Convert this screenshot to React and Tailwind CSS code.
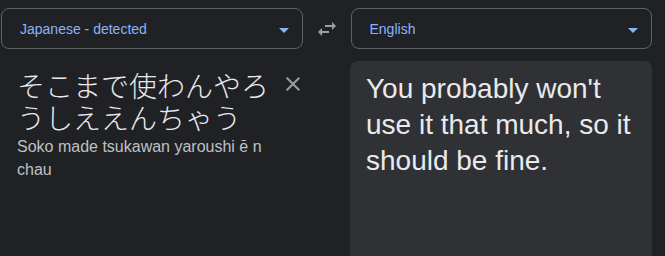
import React from 'react';

function Caret() {
  return (
    <svg width="10" height="5" viewBox="7 10 10 5" className="mt-[3px]" aria-hidden="true">
      <path d="M7 10l5 5 5-5z" fill="#8ab4f8" />
    </svg>
  );
}

function LangSelect({ label }) {
  return (
    <div className="flex h-[41px] flex-1 items-center justify-between rounded-lg border border-[#5f6368] pl-[18px] pr-[13px] text-[14px] text-[#8ab4f8]">
      <span className="pt-[2px]">{label}</span>
      <Caret />
    </div>
  );
}

export default function App() {
  return (
    <div
      className="h-[256px] w-[665px] overflow-hidden bg-[#202124] text-[#e8eaed]"
      style={{ fontFamily: '"Liberation Sans", Arial, "Noto Sans CJK JP", sans-serif' }}
    >
      {/* language bar */}
      <div className="flex items-center pl-px pr-[13px] pt-2">
        <LangSelect label="Japanese - detected" />
        <div className="flex w-[48px] items-center justify-center">
          <svg width="24" height="24" viewBox="0 0 24 24" aria-hidden="true">
            <path d="M6.99 11L3 15l3.99 4v-3H14v-2H6.99v-3zM21 9l-3.99-4v3H10v2h7.01v3L21 9z" fill="#9aa0a6" />
          </svg>
        </div>
        <LangSelect label="English" />
      </div>

      {/* panels */}
      <div className="mt-3 flex pr-[13px]">
        <div className="flex w-[350px] pl-[17px] pt-[8px]">
          <div className="w-[264px]">
            <div className="text-[28px] font-light leading-[32px] text-[#e8eaed]" style={{ fontFamily: '"Noto Sans CJK JP", sans-serif' }}>
              そこまで使わんやろうしええんちゃう
            </div>
            <div className="mt-[2px] text-[16px] leading-[23px] text-[#bdc1c6]">
              Soko made tsukawan yaroushi ē n chau
            </div>
          </div>
          <div className="pt-[3px]">
            <svg width="24" height="24" viewBox="0 0 24 24" aria-hidden="true">
              <path d="M19 6.41L17.59 5 12 10.59 6.41 5 5 6.41 10.59 12 5 17.59 6.41 19 12 13.41 17.59 19 19 17.59 13.41 12z" fill="#9aa0a6" />
            </svg>
          </div>
        </div>
        <div className="h-[200px] flex-1 rounded-lg bg-[#303134] pl-4 pr-4 pt-[10px] text-[28px] leading-[36px] text-[#e8eaed]">
          You probably won't use it that much, so it should be fine.
        </div>
      </div>
    </div>
  );
}
